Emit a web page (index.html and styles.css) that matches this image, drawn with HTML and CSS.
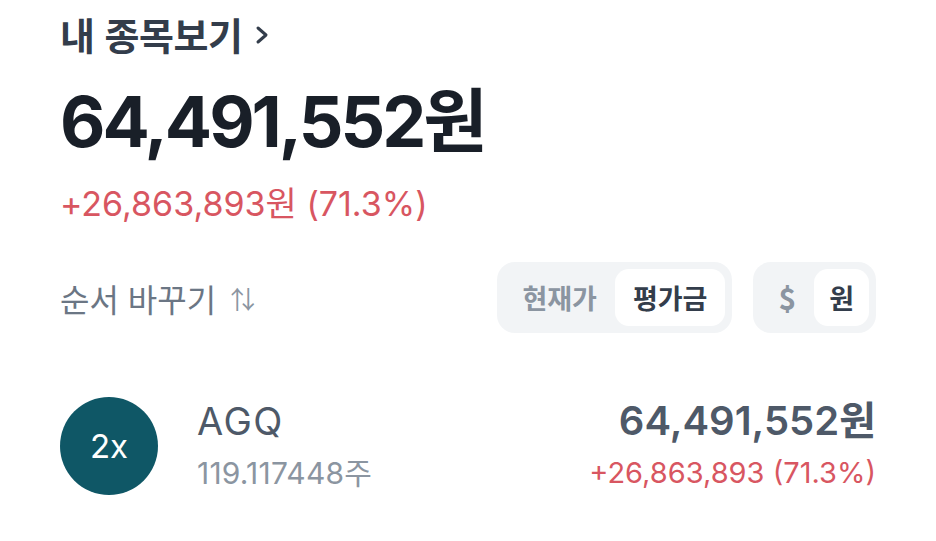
FILE: index.html
```html
<!DOCTYPE html>
<html lang="ko">
<head>
<meta charset="utf-8">
<link rel="stylesheet" href="styles.css">
</head>
<body>
<main class="page">
  <header class="head">
    <h1 class="title">내 종목보기 <svg class="chev" width="16" height="24" viewBox="0 0 16 24"><path d="M4 5l8 7-8 7" fill="none" stroke="#333d4b" stroke-width="3" stroke-linecap="round" stroke-linejoin="round"/></svg></h1>
    <div class="total">64,491,552원</div>
    <div class="gain">+26,863,893원 (71.3%)</div>
  </header>
  <section class="controls">
    <div class="sort">순서 바꾸기 <span class="arrows">⇅</span></div>
    <div class="toggles">
      <div class="seg">
        <span class="opt">현재가</span>
        <span class="opt on">평가금</span>
      </div>
      <div class="seg">
        <span class="opt dollar">$</span>
        <span class="opt on">원</span>
      </div>
    </div>
  </section>
  <section class="row">
    <div class="logo">2x</div>
    <div class="info">
      <div class="name">AGQ</div>
      <div class="qty">119.117448주</div>
    </div>
    <div class="vals">
      <div class="val">64,491,552원</div>
      <div class="vgain">+26,863,893 (71.3%)</div>
    </div>
  </section>
</main>
</body>
</html>
```
FILE: styles.css
```css
* { box-sizing: border-box; margin: 0; padding: 0; }
html, body { background: #fff; }
body {
  font-family: Inter, "Noto Sans CJK KR", sans-serif;
  width: 936px;
  height: 541px;
  overflow: hidden;
}
.page { padding: 12px 60px 0 60px; }
.title {
  font-family: "Noto Sans CJK KR", sans-serif;
  font-size: 38px;
  font-weight: 700;
  color: #333d4b;
  line-height: 44px;
  display: flex;
  align-items: center;
  gap: 12px;
  letter-spacing: -0.5px;
}
.chev { margin-top: 2px; }
.total {
  margin-top: 26px;
  font-size: 70px;
  font-weight: 700;
  color: #191f28;
  line-height: 80px;
  letter-spacing: -3px;
}
.gain {
  margin-top: 22px;
  font-size: 34px;
  color: #d85661;
  line-height: 40px;
  letter-spacing: 0;
}
.controls {
  margin-top: 38px;
  display: flex;
  justify-content: space-between;
  align-items: center;
}
.sort {
  font-family: "Noto Sans CJK KR", sans-serif;
  font-size: 32px;
  color: #6b7684;
  display: flex;
  align-items: center;
  gap: 14px;
}
.arrows { font-size: 25px; color: #8b95a1; }
.toggles { display: flex; gap: 21px; }
.seg {
  background: #f2f4f6;
  border-radius: 18px;
  padding: 7px;
  display: flex;
  align-items: center;
}
.opt {
  font-family: "Noto Sans CJK KR", sans-serif;
  font-size: 27px;
  font-weight: 700;
  color: #8b95a1;
  height: 57px;
  line-height: 57px;
  padding: 0 15px;
  border-radius: 14px;
}
.seg:first-child .opt { padding: 0 18px; }
.opt.dollar { font-size: 30px; padding: 0 18px; }
.opt.on { background: #fff; color: #333d4b; }
.row {
  margin-top: 64px;
  display: flex;
  align-items: center;
}
.logo {
  width: 98px;
  height: 98px;
  border-radius: 50%;
  background: #0f5766;
  color: #fff;
  font-size: 33px;
  display: flex;
  align-items: center;
  justify-content: center;
  flex-shrink: 0;
}
.info { margin-left: 39px; flex: 1; }
.name { font-size: 38px; color: #4e5968; line-height: 44px; letter-spacing: 1.5px; }
.qty { font-size: 30px; color: #8b95a1; line-height: 40px; margin-top: 10px; letter-spacing: 0.2px; }
.vals { text-align: right; }
.val { font-size: 40px; font-weight: 600; color: #4e5968; line-height: 44px; letter-spacing: 0; }
.vgain { font-size: 29px; color: #d85661; line-height: 40px; margin-top: 10px; letter-spacing: 0; }
```
